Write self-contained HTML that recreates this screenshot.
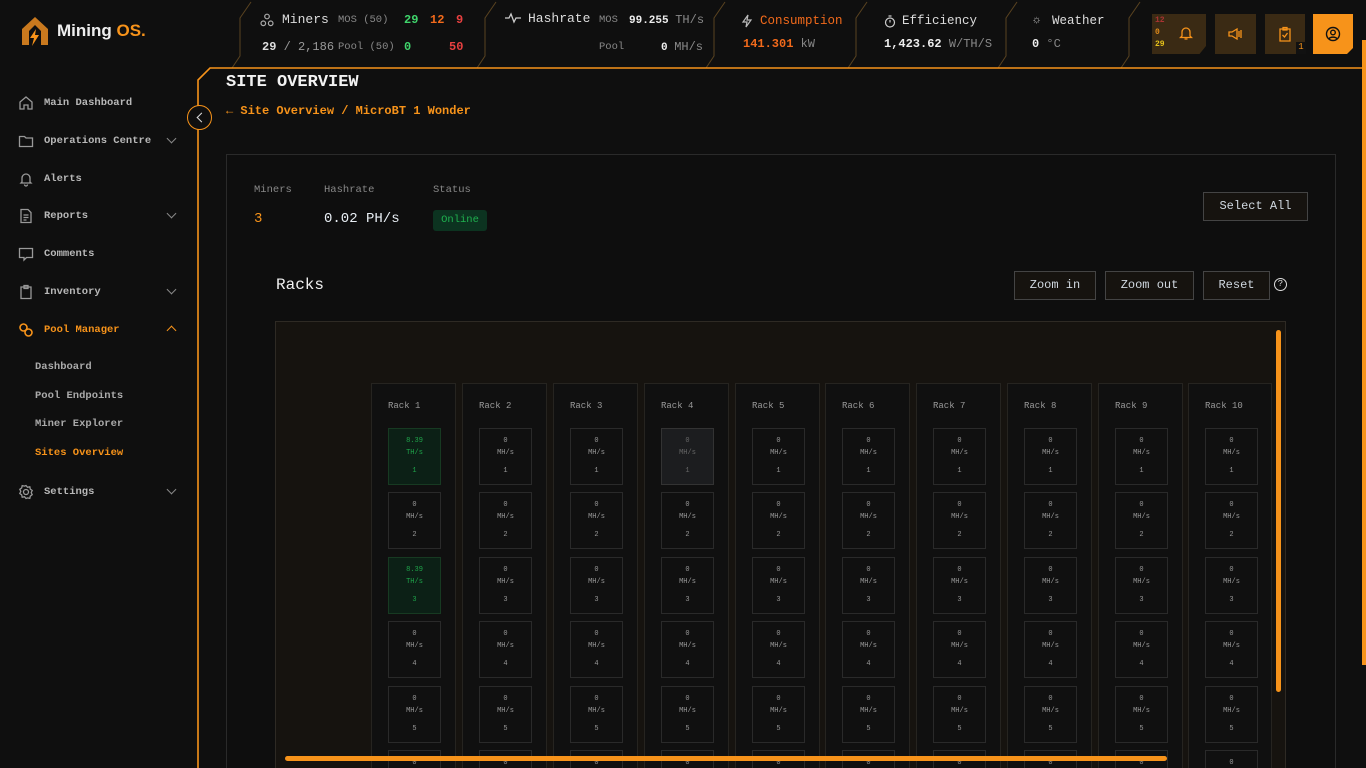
<!DOCTYPE html>
<html><head><meta charset="utf-8"><style>
*{box-sizing:border-box;margin:0;padding:0}
html,body{width:1366px;height:768px;overflow:hidden}
body{background:#0f0f0f;font-family:"Liberation Mono",monospace;color:#ccc;position:relative}
#root{position:absolute;left:0;top:0;width:1366px;height:768px;overflow:hidden}
.a{position:absolute}
.nav{position:absolute;left:18px;font-size:10.5px;color:#b8b8b8;font-weight:bold;display:flex;align-items:center}
.nav svg{margin-right:10px}
.chev{position:absolute;left:168px;width:7px;height:7px;border-right:1.3px solid #888;border-bottom:1.3px solid #888;transform:rotate(45deg)}
.sub{position:absolute;left:35px;font-size:10.5px;color:#aaa;font-weight:bold}
.btn{position:absolute;border:1px solid #444;background:#16130f;color:#d0d8e0;font-size:12px;text-align:center;line-height:27px;height:29px}
.rack{position:absolute;top:383px;width:85px;height:385px;border:1px solid #262420;border-bottom:none;background:#101010}
.rack b{position:absolute;left:16px;top:17px;font-size:9px;font-weight:normal;color:#999}
.c{position:absolute;left:16px;width:53px;height:57px;border:1px solid #2a2a2a;background:#101010;font-size:7px;color:#999;text-align:center}
.c.l{height:18px;border-bottom:none}
.c i{position:absolute;left:0;right:0;font-style:normal}
.c .v{top:8px}.c .u{top:20px}.c .n{top:38px}
.g{background:#0c2016;border-color:#173a22;color:#1fa34a}
.gr{background:#1c1d1f;border-color:#333;color:#666}
#racks{position:absolute;left:276px;top:322px;width:1009px;height:446px;overflow:hidden}
#racks>div{position:absolute;left:-276px;top:-322px;width:1366px;height:768px}
</style></head><body><div id="root">
<svg class="a" style="left:22px;top:17px" width="26" height="30" viewBox="0 0 26 30"><path d="M0 12 L13 0 L26 12 L26 28 L19 28 L19 14 L13 8 L7 14 L7 28 L0 28Z" fill="#c9791e"/><path d="M14 12 L8 21 L12 21 L10 29 L17 18 L13 18 Z" fill="#f7931a"/></svg>
<div class="a" style="left:57px;top:21px;font-size:17px;font-weight:bold;font-family:'Liberation Sans',sans-serif;color:#eee">Mining <span style="color:#f7931a">OS.</span></div>
<div class="nav" style="top:95px"><svg width="16" height="16" viewBox="0 0 16 16" fill="none" stroke="#999" stroke-width="1.3"><path d="M2 14V7L8 2l6 5v7h-4v-4H6v4z"/></svg>Main Dashboard</div>
<div class="nav" style="top:133px"><svg width="16" height="16" viewBox="0 0 16 16" fill="none" stroke="#999" stroke-width="1.3"><path d="M1.5 3.5h5l1.5 1.5h6.5v8.5h-13z"/></svg>Operations Centre</div><div class="chev" style="top:135px"></div>
<div class="nav" style="top:171px"><svg width="16" height="16" viewBox="0 0 16 16" fill="none" stroke="#999" stroke-width="1.3"><path d="M4 11V7a4 4 0 018 0v4l1 1H3zM6.5 13.5a1.5 1.5 0 003 0"/></svg>Alerts</div>
<div class="nav" style="top:208px"><svg width="16" height="16" viewBox="0 0 16 16" fill="none" stroke="#999" stroke-width="1.3"><path d="M3 1.5h7l3 3v10H3zM5.5 7h5M5.5 9.5h5M5.5 12h3"/></svg>Reports</div><div class="chev" style="top:210px"></div>
<div class="nav" style="top:246px"><svg width="16" height="16" viewBox="0 0 16 16" fill="none" stroke="#999" stroke-width="1.3"><path d="M1.5 2.5h13v9h-6l-2.5 2.5v-2.5h-4.5z"/></svg>Comments</div>
<div class="nav" style="top:284px"><svg width="16" height="16" viewBox="0 0 16 16" fill="none" stroke="#999" stroke-width="1.3"><path d="M3 3h10v11.5H3zM6 1.5h4v3H6z"/></svg>Inventory</div><div class="chev" style="top:286px"></div>
<div class="nav" style="top:322px;color:#f7931a"><svg width="16" height="16" viewBox="0 0 16 16" fill="none" stroke="#f7931a" stroke-width="1.6"><circle cx="5.5" cy="5.5" r="3.5"/><circle cx="10.5" cy="10.5" r="3.5"/></svg>Pool Manager</div><div class="chev" style="top:327px;border-color:#f7931a;transform:rotate(-135deg)"></div>
<div class="sub" style="top:361px">Dashboard</div>
<div class="sub" style="top:390px">Pool Endpoints</div>
<div class="sub" style="top:418px">Miner Explorer</div>
<div class="sub" style="top:447px;color:#f7931a">Sites Overview</div>
<div class="nav" style="top:484px"><svg width="16" height="16" viewBox="0 0 16 16" fill="none" stroke="#999" stroke-width="1.3"><circle cx="8" cy="8" r="2.5"/><path d="M8 1.5l1.5 1.8 2.3-.5.5 2.3 1.9 1.4-1 2.1 1 2.1-1.9 1.4-.5 2.3-2.3-.5L8 14.5l-1.5-1.8-2.3.5-.5-2.3-1.9-1.4 1-2.1-1-2.1 1.9-1.4.5-2.3 2.3.5z"/></svg>Settings</div><div class="chev" style="top:486px"></div>
<svg class="a" style="left:0;top:0" width="1366" height="70" fill="none" stroke="#5a4320" stroke-width="1">
<path d="M251 2L240 18V56L232 68"/><path d="M496 2L485 18V56L477 68"/><path d="M725 2L714 18V56L706 68"/><path d="M867 2L856 18V56L848 68"/><path d="M1017 2L1006 18V56L998 68"/><path d="M1140 2L1129 18V56L1121 68"/>
</svg>
<svg class="a" style="left:260px;top:13px" width="14" height="14" viewBox="0 0 14 14" fill="none" stroke="#aaa" stroke-width="1.2"><circle cx="7" cy="3.5" r="2.3"/><circle cx="3.3" cy="10.3" r="2.3"/><circle cx="10.7" cy="10.3" r="2.3"/></svg>
<div class="a" style="left:282px;top:12px;font-size:13px;color:#ddd">Miners</div>
<div class="a" style="left:338px;top:14px;font-size:10.5px;color:#888">MOS (50)</div>
<div class="a" style="left:404px;top:13px;font-size:12px;font-weight:bold;color:#3fd46b">29</div>
<div class="a" style="left:430px;top:13px;font-size:12px;font-weight:bold;color:#f26a1b">12</div>
<div class="a" style="left:456px;top:13px;font-size:12px;font-weight:bold;color:#e84040">9</div>
<div class="a" style="left:262px;top:40px;font-size:12px;color:#ddd"><b>29</b><span style="color:#999"> / 2,186</span></div>
<div class="a" style="left:338px;top:41px;font-size:10.5px;color:#888">Pool (50)</div>
<div class="a" style="left:404px;top:40px;font-size:12px;font-weight:bold;color:#3fd46b">0</div>
<div class="a" style="left:449px;top:40px;font-size:12px;font-weight:bold;color:#e84040">50</div>
<svg class="a" style="left:505px;top:12px" width="16" height="12" viewBox="0 0 16 12" fill="none" stroke="#ccc" stroke-width="1.3"><path d="M0 6h4l2-4 3 8 2-4h5"/></svg>
<div class="a" style="left:528px;top:11px;font-size:13px;color:#ddd">Hashrate</div>
<div class="a" style="left:599px;top:14px;font-size:10.5px;color:#888">MOS</div>
<div class="a" style="left:629px;top:13px;font-size:11px;color:#eee;font-weight:bold">99.255 <span style="color:#888;font-weight:normal;font-size:12px">TH/s</span></div>
<div class="a" style="left:599px;top:41px;font-size:10.5px;color:#888">Pool</div>
<div class="a" style="left:661px;top:40px;font-size:11px;color:#eee;font-weight:bold">0 <span style="color:#888;font-weight:normal;font-size:12px">MH/s</span></div>
<svg class="a" style="left:741px;top:14px" width="12" height="14" viewBox="0 0 12 14" fill="none" stroke="#bbb" stroke-width="1.2"><path d="M7 1L2 8h4l-1 5 5-7H6z"/></svg>
<div class="a" style="left:760px;top:14px;font-size:12.5px;color:#f26a1b">Consumption</div>
<div class="a" style="left:743px;top:37px;font-size:12px;color:#f26a1b;font-weight:bold">141.301 <span style="color:#888;font-weight:normal">kW</span></div>
<svg class="a" style="left:884px;top:15px" width="12" height="13" viewBox="0 0 12 13" fill="none" stroke="#ccc" stroke-width="1.2"><circle cx="6" cy="7.5" r="4.5"/><path d="M6 7.5V5M4.5 1h3"/></svg>
<div class="a" style="left:902px;top:14px;font-size:12.5px;color:#ddd">Efficiency</div>
<div class="a" style="left:884px;top:37px;font-size:12px;color:#eee;font-weight:bold">1,423.62 <span style="color:#888;font-weight:normal">W/TH/S</span></div>
<div class="a" style="left:1033px;top:13px;font-size:12px;color:#aaa">☼</div>
<div class="a" style="left:1052px;top:14px;font-size:12.5px;color:#ddd">Weather</div>
<div class="a" style="left:1032px;top:37px;font-size:12px;color:#eee;font-weight:bold">0 <span style="color:#888;font-weight:normal">°C</span></div>
<div class="a" style="left:1152px;top:14px;width:54px;height:40px;background:#3a2a14;clip-path:polygon(0 0,100% 0,100% 80%,88% 100%,0 100%)"></div>
<div class="a" style="left:1155px;top:15px;font-size:8px;line-height:12px;font-weight:bold"><div style="color:#a33">12</div><div style="color:#e08a1a">0</div><div style="color:#e6c21a">29</div></div>
<svg class="a" style="left:1179px;top:26px" width="14" height="15" viewBox="0 0 14 15" fill="none" stroke="#f7931a" stroke-width="1.3"><path d="M3 10V6a4 4 0 018 0v4l1.5 1.5h-11zM5.5 13h3"/></svg>
<div class="a" style="left:1215px;top:14px;width:41px;height:40px;background:#3a2a14"></div>
<svg class="a" style="left:1228px;top:27px" width="16" height="14" viewBox="0 0 16 14" fill="none" stroke="#f7931a" stroke-width="1.3"><path d="M1 5h3l5-3v10l-5-3H1zM11 4v6M13 3v8"/></svg>
<div class="a" style="left:1265px;top:14px;width:40px;height:40px;background:#3a2a14"></div>
<svg class="a" style="left:1278px;top:26px" width="14" height="16" viewBox="0 0 14 16" fill="none" stroke="#f7931a" stroke-width="1.3"><path d="M2 3h10v12H2zM5 1.5h4v2.5H5zM4.5 9l2 2 3-4"/></svg>
<div class="a" style="left:1296px;top:42px;width:10px;height:12px;background:#111;color:#f7931a;font-size:9px;text-align:center">1</div>
<div class="a" style="left:1313px;top:14px;width:40px;height:40px;background:#f7931a;clip-path:polygon(0 0,100% 0,100% 85%,85% 100%,0 100%)"></div>
<svg class="a" style="left:1325px;top:26px" width="16" height="16" viewBox="0 0 16 16" fill="none" stroke="#111" stroke-width="1.4"><circle cx="8" cy="8" r="6.5"/><circle cx="8" cy="6.5" r="2.3"/><path d="M4 13c1-2.5 7-2.5 8 0"/></svg>
<svg class="a" style="left:190px;top:60px" width="1176" height="708" fill="none" stroke="#f7931a" stroke-width="1.6"><path d="M8 708V20L20 8H1176"/></svg>
<div class="a" style="left:187px;top:105px;width:25px;height:25px;border:1.5px solid #f7931a;border-radius:50%;background:#0f0f0f"></div>
<div class="a" style="left:198px;top:114px;width:7px;height:7px;border-left:1.3px solid #ddd;border-bottom:1.3px solid #ddd;transform:rotate(45deg)"></div>
<div class="a" style="left:226px;top:73px;font-size:17px;font-weight:bold;color:#f2f2f2">SITE OVERVIEW</div>
<div class="a" style="left:226px;top:104px;font-size:12px;font-weight:bold;color:#f7931a">← Site Overview / MicroBT 1 Wonder</div>
<div class="a" style="left:226px;top:154px;width:1110px;height:614px;border:1px solid #2a2a2a;border-bottom:none;background:#0e0e0e"></div>
<div class="a" style="left:254px;top:184px;font-size:10.5px;color:#888">Miners</div>
<div class="a" style="left:324px;top:184px;font-size:10.5px;color:#888">Hashrate</div>
<div class="a" style="left:433px;top:184px;font-size:10.5px;color:#888">Status</div>
<div class="a" style="left:254px;top:211px;font-size:14px;color:#f7931a">3</div>
<div class="a" style="left:324px;top:211px;font-size:14px;color:#e8eef4">0.02 PH/s</div>
<div class="a" style="left:433px;top:210px;width:54px;height:21px;background:#0c3320;border-radius:3px;color:#1fb24f;font-size:10.5px;text-align:center;line-height:21px">Online</div>
<div class="btn" style="left:1203px;top:192px;width:105px">Select All</div>
<div class="a" style="left:276px;top:276px;font-size:16px;color:#f0f0f0">Racks</div>
<div class="btn" style="left:1014px;top:271px;width:82px">Zoom in</div>
<div class="btn" style="left:1105px;top:271px;width:89px">Zoom out</div>
<div class="btn" style="left:1203px;top:271px;width:67px">Reset</div>
<div class="a" style="left:1274px;top:278px;width:13px;height:13px;border:1.2px solid #ddd;border-radius:50%;font-size:9px;text-align:center;line-height:11px;color:#ddd">?</div>
<div class="a" style="left:275px;top:321px;width:1011px;height:447px;border:1px solid #2e2a24;border-bottom:none;background:#16130f"></div>
<div id="racks"><div>
<div class="rack" style="left:371px"><b>Rack 1</b>
<div class="c g" style="top:44px"><i class="v">8.39</i><i class="u">TH/s</i><i class="n">1</i></div>
<div class="c" style="top:108px"><i class="v">0</i><i class="u">MH/s</i><i class="n">2</i></div>
<div class="c g" style="top:173px"><i class="v">8.39</i><i class="u">TH/s</i><i class="n">3</i></div>
<div class="c" style="top:237px"><i class="v">0</i><i class="u">MH/s</i><i class="n">4</i></div>
<div class="c" style="top:302px"><i class="v">0</i><i class="u">MH/s</i><i class="n">5</i></div>
<div class="c l" style="top:366px"><i class="v">0</i></div></div>
<div class="rack" style="left:462px"><b>Rack 2</b>
<div class="c" style="top:44px"><i class="v">0</i><i class="u">MH/s</i><i class="n">1</i></div><div class="c" style="top:108px"><i class="v">0</i><i class="u">MH/s</i><i class="n">2</i></div><div class="c" style="top:173px"><i class="v">0</i><i class="u">MH/s</i><i class="n">3</i></div><div class="c" style="top:237px"><i class="v">0</i><i class="u">MH/s</i><i class="n">4</i></div><div class="c" style="top:302px"><i class="v">0</i><i class="u">MH/s</i><i class="n">5</i></div><div class="c l" style="top:366px"><i class="v">0</i></div></div>
<div class="rack" style="left:553px"><b>Rack 3</b>
<div class="c" style="top:44px"><i class="v">0</i><i class="u">MH/s</i><i class="n">1</i></div><div class="c" style="top:108px"><i class="v">0</i><i class="u">MH/s</i><i class="n">2</i></div><div class="c" style="top:173px"><i class="v">0</i><i class="u">MH/s</i><i class="n">3</i></div><div class="c" style="top:237px"><i class="v">0</i><i class="u">MH/s</i><i class="n">4</i></div><div class="c" style="top:302px"><i class="v">0</i><i class="u">MH/s</i><i class="n">5</i></div><div class="c l" style="top:366px"><i class="v">0</i></div></div>
<div class="rack" style="left:644px"><b>Rack 4</b>
<div class="c gr" style="top:44px"><i class="v">0</i><i class="u">MH/s</i><i class="n">1</i></div><div class="c" style="top:108px"><i class="v">0</i><i class="u">MH/s</i><i class="n">2</i></div><div class="c" style="top:173px"><i class="v">0</i><i class="u">MH/s</i><i class="n">3</i></div><div class="c" style="top:237px"><i class="v">0</i><i class="u">MH/s</i><i class="n">4</i></div><div class="c" style="top:302px"><i class="v">0</i><i class="u">MH/s</i><i class="n">5</i></div><div class="c l" style="top:366px"><i class="v">0</i></div></div>
<div class="rack" style="left:735px"><b>Rack 5</b>
<div class="c" style="top:44px"><i class="v">0</i><i class="u">MH/s</i><i class="n">1</i></div><div class="c" style="top:108px"><i class="v">0</i><i class="u">MH/s</i><i class="n">2</i></div><div class="c" style="top:173px"><i class="v">0</i><i class="u">MH/s</i><i class="n">3</i></div><div class="c" style="top:237px"><i class="v">0</i><i class="u">MH/s</i><i class="n">4</i></div><div class="c" style="top:302px"><i class="v">0</i><i class="u">MH/s</i><i class="n">5</i></div><div class="c l" style="top:366px"><i class="v">0</i></div></div>
<div class="rack" style="left:825px"><b>Rack 6</b>
<div class="c" style="top:44px"><i class="v">0</i><i class="u">MH/s</i><i class="n">1</i></div><div class="c" style="top:108px"><i class="v">0</i><i class="u">MH/s</i><i class="n">2</i></div><div class="c" style="top:173px"><i class="v">0</i><i class="u">MH/s</i><i class="n">3</i></div><div class="c" style="top:237px"><i class="v">0</i><i class="u">MH/s</i><i class="n">4</i></div><div class="c" style="top:302px"><i class="v">0</i><i class="u">MH/s</i><i class="n">5</i></div><div class="c l" style="top:366px"><i class="v">0</i></div></div>
<div class="rack" style="left:916px"><b>Rack 7</b>
<div class="c" style="top:44px"><i class="v">0</i><i class="u">MH/s</i><i class="n">1</i></div><div class="c" style="top:108px"><i class="v">0</i><i class="u">MH/s</i><i class="n">2</i></div><div class="c" style="top:173px"><i class="v">0</i><i class="u">MH/s</i><i class="n">3</i></div><div class="c" style="top:237px"><i class="v">0</i><i class="u">MH/s</i><i class="n">4</i></div><div class="c" style="top:302px"><i class="v">0</i><i class="u">MH/s</i><i class="n">5</i></div><div class="c l" style="top:366px"><i class="v">0</i></div></div>
<div class="rack" style="left:1007px"><b>Rack 8</b>
<div class="c" style="top:44px"><i class="v">0</i><i class="u">MH/s</i><i class="n">1</i></div><div class="c" style="top:108px"><i class="v">0</i><i class="u">MH/s</i><i class="n">2</i></div><div class="c" style="top:173px"><i class="v">0</i><i class="u">MH/s</i><i class="n">3</i></div><div class="c" style="top:237px"><i class="v">0</i><i class="u">MH/s</i><i class="n">4</i></div><div class="c" style="top:302px"><i class="v">0</i><i class="u">MH/s</i><i class="n">5</i></div><div class="c l" style="top:366px"><i class="v">0</i></div></div>
<div class="rack" style="left:1098px"><b>Rack 9</b>
<div class="c" style="top:44px"><i class="v">0</i><i class="u">MH/s</i><i class="n">1</i></div><div class="c" style="top:108px"><i class="v">0</i><i class="u">MH/s</i><i class="n">2</i></div><div class="c" style="top:173px"><i class="v">0</i><i class="u">MH/s</i><i class="n">3</i></div><div class="c" style="top:237px"><i class="v">0</i><i class="u">MH/s</i><i class="n">4</i></div><div class="c" style="top:302px"><i class="v">0</i><i class="u">MH/s</i><i class="n">5</i></div><div class="c l" style="top:366px"><i class="v">0</i></div></div>
<div class="rack" style="left:1188px;width:84px"><b>Rack 10</b>
<div class="c" style="top:44px"><i class="v">0</i><i class="u">MH/s</i><i class="n">1</i></div><div class="c" style="top:108px"><i class="v">0</i><i class="u">MH/s</i><i class="n">2</i></div><div class="c" style="top:173px"><i class="v">0</i><i class="u">MH/s</i><i class="n">3</i></div><div class="c" style="top:237px"><i class="v">0</i><i class="u">MH/s</i><i class="n">4</i></div><div class="c" style="top:302px"><i class="v">0</i><i class="u">MH/s</i><i class="n">5</i></div><div class="c l" style="top:366px"><i class="v">0</i></div></div>
</div></div>
<div class="a" style="left:1276px;top:330px;width:5px;height:362px;background:#f7931a;border-radius:3px"></div>
<div class="a" style="left:285px;top:756px;width:882px;height:5px;background:#f7931a;border-radius:3px"></div>
<div class="a" style="left:1362px;top:40px;width:4px;height:625px;background:#f7931a"></div>
</div></body></html>
